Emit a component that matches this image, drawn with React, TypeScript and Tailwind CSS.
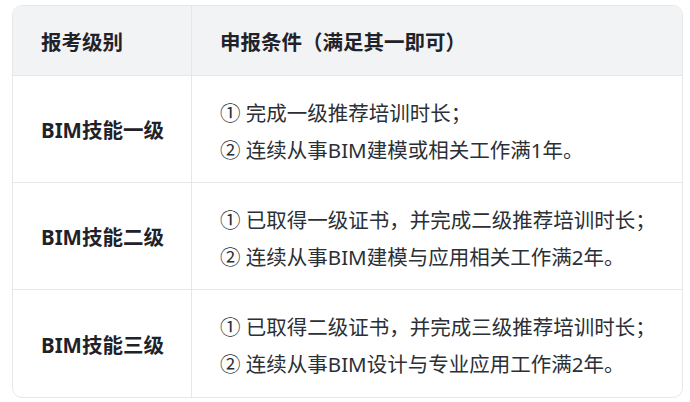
import React from "react";

const rows = [
  {
    level: "BIM技能一级",
    lines: ["① 完成一级推荐培训时长；", "② 连续从事BIM建模或相关工作满1年。"],
  },
  {
    level: "BIM技能二级",
    lines: ["① 已取得一级证书，并完成二级推荐培训时长；", "② 连续从事BIM建模与应用相关工作满2年。"],
  },
  {
    level: "BIM技能三级",
    lines: ["① 已取得二级证书，并完成三级推荐培训时长；", "② 连续从事BIM设计与专业应用工作满2年。"],
  },
];

export default function App() {
  return (
    <div
      className="w-[690px] h-[402px] bg-white pl-[12px] pt-[5px]"
      style={{ fontFamily: '"Noto Sans", "Noto Sans CJK SC", sans-serif' }}
    >
      <div className="w-[671px] rounded-[10px] border border-[#e6e7e9] overflow-hidden">
        <div className="flex h-[70px] bg-[#f2f3f5] border-b border-[#e6e7e9] text-[20.5px] font-bold text-[#1f2329] whitespace-nowrap">
          <div className="w-[179px] shrink-0 border-r border-[#e6e7e9] flex items-center pl-[28px] pt-[3px]">
            报考级别
          </div>
          <div className="flex-1 flex items-center pl-[28px] pt-[3px]">申报条件（满足其一即可）</div>
        </div>
        {rows.map((r, i) => (
          <div
            key={r.level}
            className={`flex h-[107px] ${i < rows.length - 1 ? "border-b border-[#e6e7e9]" : "h-[106px]"}`}
          >
            <div className="w-[179px] shrink-0 border-r border-[#e6e7e9] flex items-center pl-[28px] pt-[3px] text-[20.5px] font-bold text-[#1f2329] whitespace-nowrap">
              {r.level}
            </div>
            <div className="flex-1 flex flex-col justify-center pl-[28px] pt-[5px] text-[20.5px] text-[#2b2f36] leading-[37px] whitespace-nowrap">
              {r.lines.map((l) => (
                <div key={l}>{l}</div>
              ))}
            </div>
          </div>
        ))}
      </div>
    </div>
  );
}
